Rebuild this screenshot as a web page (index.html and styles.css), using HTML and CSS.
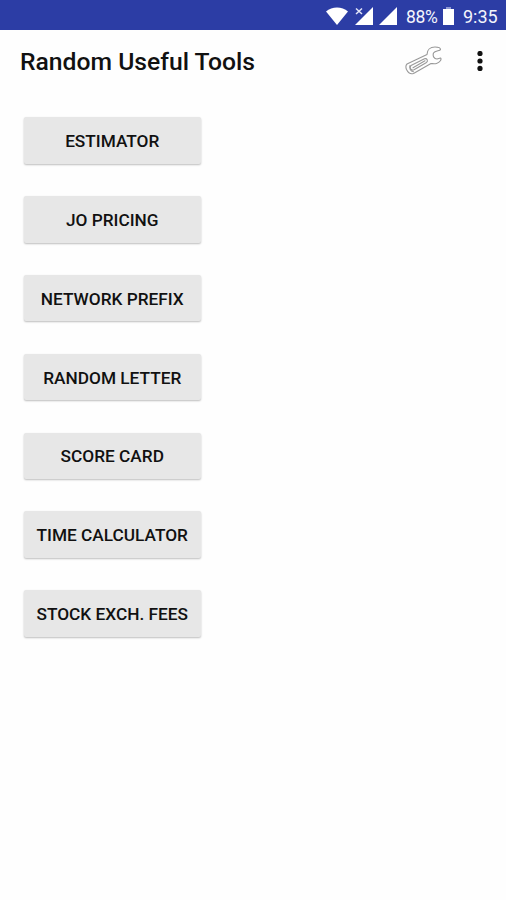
FILE: index.html
```html
<!DOCTYPE html>
<html lang="en">
<head>
  <meta charset="UTF-8" />
  <meta name="viewport" content="width=device-width, initial-scale=1" />
  <title>Random Useful Tools</title>
  <link rel="stylesheet" href="styles.css">
</head>
<body>
  <div class="status-bar">
    <svg class="wifi" width="22" height="18" viewBox="0 0 22 18">
      <path d="M0 4.500C6-.8 16-.8 22 4.500L11 18z" fill="#fff" />
    </svg>
    <svg class="signal-off" width="18" height="18" viewBox="0 0 18 18">
      <path d="M18 0V18H0z" fill="#fff" />
      <path d="M0 0H8.500V9H0z" fill="#2c3da5" />
      <path d="M1 1.500L7 7M7 1.500L1 7" stroke="#e4e7f8" stroke-width="1.500" />
    </svg>
    <svg class="signal" width="18" height="18" viewBox="0 0 18 18">
      <path d="M18 0V18H0z" fill="#fff" />
    </svg>
    <span class="percent">88%</span>
    <svg class="battery" width="11" height="18" viewBox="0 0 11 18">
      <path d="M3 0H8V2H3z" fill="#8f99d2" />
      <path d="M0 2H11V18H0z" fill="#fff" />
    </svg>
    <span class="clock">9:35</span>
  </div>

  <header class="app-bar">
    <h1>Random Useful Tools</h1>
    <svg class="wrench" width="38" height="30" viewBox="0 0 38 30" fill="none" stroke="#999" stroke-width="1.100" stroke-linejoin="round" stroke-linecap="round">
      <path d="M2 18L22 8.500C22 4 25 1 30 1C33 1 35.500 2 35.500 3.500C35 5 30 4.500 28.500 7C27.500 10 29 13 32 13L35.500 12C37 13 35 16.500 31.500 17.500C29 18.200 27.500 17.500 26 17.500L8.500 27.500C5.500 28.500 3 26.500 1.500 23.500C.5 21 .5 19.500 2 18z" />
      <path d="M6 19.500L19.500 12.800C22 12 23.500 15 21.500 16.500L9 23.800C6 25 4 21.500 6 19.500z" />
      <path d="M8 21.800L20 14.800" />
      <path d="M5 19.500C4 22 5.500 25.500 8.500 25.800" />
    </svg>
    <svg class="more" width="6" height="20" viewBox="0 0 6 20">
      <circle cx="3" cy="2.500" r="2.600" />
      <circle cx="3" cy="10" r="2.600" />
      <circle cx="3" cy="17.400" r="2.600" />
    </svg>
  </header>

  <main class="tools">
    <button>Estimator</button>
    <button>JO Pricing</button>
    <button>Network Prefix</button>
    <button>Random Letter</button>
    <button>Score Card</button>
    <button>Time Calculator</button>
    <button>Stock Exch. Fees</button>
  </main>
</body>
</html>
```
FILE: styles.css
```css
body {
  margin: 0;
  height: 100vh;
  background: #fefefe;
  color: #111;
  font-family: Roboto, sans-serif;
  overflow: hidden;
}

svg {
  display: block;
  flex-shrink: 0;
}

/* === Status bar === */
.status-bar {
  box-sizing: border-box;
  height: 30px;
  padding: 1px 9px 0 0;
  display: flex;
  align-items: center;
  justify-content: flex-end;
  background: #2c3da5;
  color: #f4f5fc;
  font-size: 18px;
  line-height: 28px;
  white-space: nowrap;
}

.status-bar span {
  padding-top: 2px;
}

.signal-off {
  margin-left: 7px;
}

.signal {
  margin-left: 6px;
}

.percent {
  width: 32px;
  margin-left: 9px;
  font-size: 17.5px;
  letter-spacing: -0.3px;
}

.battery {
  margin-left: 5px;
}

.clock {
  width: 34px;
  margin-left: 9px;
}

/* === App bar === */
.app-bar {
  box-sizing: border-box;
  height: 64px;
  padding: 0 23px 0 20px;
  display: flex;
  align-items: center;
}

h1 {
  flex: 1;
  margin: 0 0 2px;
  font-size: 24.7px;
  font-weight: 500;
  white-space: nowrap;
}

.wrench {
  margin: 0 34px 2px 0;
}

.more {
  margin-bottom: 2px;
  fill: #111;
}

/* === Tool buttons === */
.tools {
  padding: 23.4px 24px;
  display: flex;
  flex-direction: column;
  align-items: flex-start;
  gap: 32.3px;
}

button {
  width: 176.5px;
  height: 46.5px;
  padding: 1px 0 0;
  border: 0;
  border-radius: 2px;
  background: #e7e7e7;
  box-shadow: 0 1px 2px rgba(0, 0, 0, 0.26);
  color: #111;
  font: 500 17.25px Roboto, sans-serif;
  text-transform: uppercase;
  white-space: nowrap;
}
```
